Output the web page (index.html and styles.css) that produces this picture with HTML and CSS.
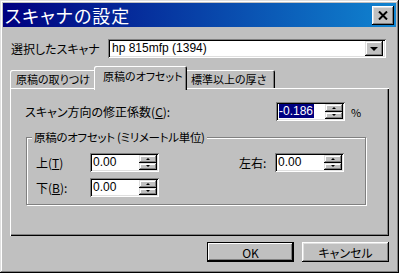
FILE: index.html
```html
<!DOCTYPE html>
<html lang="ja">
<head>
    <meta charset="UTF-8">
    <title>スキャナの設定</title>
    <link rel="stylesheet" href="styles.css">
</head>
<body>
    <div class="window">
        <div class="titlebar">
            <span class="title">スキャナの設定</span>
            <div class="close">
                <svg width="10" height="9" viewBox="0 0 10 9"><path d="M1 0.5 L9 8.5 M9 0.5 L1 8.5" stroke="#000" stroke-width="2"/></svg>
            </div>
        </div>

        <div class="content">
            <div class="scanner-row">
                <span class="scanner-label">選択したスキャナ</span>
                <div class="combo">
                    <span class="combo-text">hp 815mfp (1394)</span>
                    <div class="combo-btn"><span class="arrow-down"></span></div>
                </div>
            </div>

            <div class="tabs">
                <div class="tab tab-1">原稿の取りつけ</div>
                <div class="tab tab-active">原稿のオフセット</div>
                <div class="tab tab-3">標準以上の厚さ</div>
            </div>

            <div class="panel">
                <div class="coef-row">
                    <span class="coef-label">スキャン方向の修正係数(<u>C</u>):</span>
                    <div class="spin">
                        <span class="spin-text"><span class="selected">-0.186</span></span>
                        <div class="spin-btns">
                            <div class="spin-btn"><span class="arrow-up"></span></div>
                            <div class="spin-btn"><span class="arrow-down small"></span></div>
                        </div>
                    </div>
                    <span class="unit">%</span>
                </div>

                <div class="group">
                    <span class="legend">原稿のオフセット (ミリメートル単位)</span>
                    <div class="offset-grid">
                        <span class="field-label">上(<u>T</u>)</span>
                        <div class="spin">
                            <span class="spin-text">0.00</span>
                            <div class="spin-btns">
                                <div class="spin-btn"><span class="arrow-up"></span></div>
                                <div class="spin-btn"><span class="arrow-down small"></span></div>
                            </div>
                        </div>
                        <span></span>
                        <span class="field-label">左右:</span>
                        <div class="spin">
                            <span class="spin-text">0.00</span>
                            <div class="spin-btns">
                                <div class="spin-btn"><span class="arrow-up"></span></div>
                                <div class="spin-btn"><span class="arrow-down small"></span></div>
                            </div>
                        </div>

                        <span class="field-label">下(<u>B</u>):</span>
                        <div class="spin">
                            <span class="spin-text">0.00</span>
                            <div class="spin-btns">
                                <div class="spin-btn"><span class="arrow-up"></span></div>
                                <div class="spin-btn"><span class="arrow-down small"></span></div>
                            </div>
                        </div>
                    </div>
                </div>
            </div>

            <div class="buttons">
                <button class="btn btn-default">OK</button>
                <button class="btn">キャンセル</button>
            </div>
        </div>
    </div>
</body>
</html>
```

FILE: styles.css
```css
* {
    box-sizing: border-box;
}
body {
    margin: 0;
    background-color: #c0c0c0;
    font-family: "Noto Sans CJK JP", sans-serif;
    font-size: 12px;
    font-feature-settings: "palt" 1;
    color: #000;
}
.window {
    width: 399px;
    height: 273px;
    padding: 3px;
    background-color: #c0c0c0;
    display: flex;
    flex-direction: column;
    box-shadow: inset -1px -1px #000, inset 1px 1px #dfdfdf, inset -2px -2px #808080, inset 2px 2px #fff;
}
.titlebar {
    height: 24px;
    flex-shrink: 0;
    display: flex;
    align-items: center;
    justify-content: space-between;
    padding: 0 2px 0 2px;
    background: linear-gradient(to right, #000080, #1084d0);
}
.title {
    color: #fff;
    font-size: 18px;
    line-height: 24px;
    letter-spacing: 1px;
}
.close {
    width: 22px;
    height: 19px;
    display: flex;
    justify-content: center;
    align-items: center;
    background-color: #c0c0c0;
    box-shadow: inset -1px -1px #000, inset 1px 1px #fff, inset -2px -2px #808080, inset 2px 2px #dfdfdf;
}
.content {
    flex: 1;
    display: flex;
    flex-direction: column;
    padding: 12px 7px 0 7px;
}
.scanner-row {
    display: flex;
    align-items: center;
    height: 19px;
}
.scanner-label {
    width: 98px;
    padding-left: 1px;
}
.combo {
    width: 278px;
    height: 19px;
    display: flex;
    align-items: center;
    justify-content: space-between;
    padding: 2px 3px 2px 2px;
    background-color: #fff;
    box-shadow: inset 1px 1px #808080, inset -1px -1px #fff, inset 2px 2px #000, inset -2px -2px #dfdfdf;
}
.combo-text {
    padding-left: 2px;
    font-family: "Liberation Sans", sans-serif;
    font-size: 12px;
    line-height: 15px;
}
.combo-btn {
    width: 18px;
    height: 15px;
    display: flex;
    justify-content: center;
    align-items: center;
    background-color: #c0c0c0;
    box-shadow: inset -1px -1px #000, inset 1px 1px #dfdfdf, inset -2px -2px #808080, inset 2px 2px #fff;
}
.arrow-down {
    width: 0;
    height: 0;
    border-left: 4px solid transparent;
    border-right: 4px solid transparent;
    border-top: 4px solid #000;
}
.arrow-down.small,
.arrow-up {
    border-left-width: 2px;
    border-right-width: 2px;
    border-top-width: 2px;
}
.arrow-up {
    width: 0;
    height: 0;
    border-left: 2px solid transparent;
    border-right: 2px solid transparent;
    border-bottom: 2px solid #000;
}
.tabs {
    display: flex;
    align-items: flex-end;
    height: 22px;
    margin-top: 8px;
}
.tab {
    height: 18px;
    line-height: 17px;
    padding: 1px 0 0 6px;
    font-size: 11px;
    white-space: nowrap;
    background-color: #c0c0c0;
    box-shadow: inset 1px 1px #fff, inset -1px 0 #000, inset -2px 0 #808080;
    border-radius: 2px 2px 0 0;
}
.tab-1 {
    width: 86px;
}
.tab-active {
    position: relative;
    z-index: 1;
    width: 93px;
    height: 24px;
    margin: 0 -2px -2px -2px;
    padding: 1px 0 0 9px;
    line-height: 19px;
}
.tab-3 {
    width: 90px;
    padding-left: 6px;
}
.panel {
    height: 148px;
    padding: 14px 14px 0 15px;
    background-color: #c0c0c0;
    box-shadow: inset 1px 1px #fff, inset -1px -1px #000, inset -2px -2px #808080;
}
.coef-row {
    display: flex;
    align-items: center;
    height: 19px;
}
.coef-label {
    flex: 0 0 251px;
}
.unit {
    margin-left: 6px;
    font-size: 11px;
}
.spin {
    width: 69px;
    height: 19px;
    display: flex;
    align-items: center;
    padding: 2px;
    background-color: #fff;
    box-shadow: inset 1px 1px #808080, inset -1px -1px #fff, inset 2px 2px #000, inset -2px -2px #dfdfdf;
}
.spin-text {
    flex: 1;
    padding-left: 1px;
    font-family: "Liberation Sans", sans-serif;
    font-size: 12px;
    line-height: 15px;
}
.selected {
    background-color: #000080;
    color: #fff;
    padding-right: 1px;
}
.spin-btns {
    width: 18px;
    height: 15px;
    display: flex;
    flex-direction: column;
}
.spin-btn {
    flex: 1;
    display: flex;
    justify-content: center;
    align-items: center;
    background-color: #c0c0c0;
    box-shadow: inset -1px -1px #000, inset 1px 1px #dfdfdf, inset -2px -2px #808080, inset 2px 2px #fff;
}
.group {
    display: flex;
    flex-direction: column;
    width: 340px;
    height: 68px;
    margin: 16px 0 0 1px;
    border: 1px solid #808080;
    box-shadow: inset 1px 1px #fff, 1px 1px #fff;
}
.legend {
    align-self: flex-start;
    margin: -8px 0 0 5px;
    padding: 0 2px;
    font-size: 11.5px;
    letter-spacing: -0.3px;
    line-height: 14px;
    white-space: nowrap;
    background-color: #c0c0c0;
}
.offset-grid {
    display: grid;
    grid-template-columns: 54px 69px 80px 36px 69px;
    grid-auto-rows: 19px;
    row-gap: 6px;
    align-items: center;
    margin-top: 9px;
    padding-left: 9px;
}
.buttons {
    display: flex;
    justify-content: flex-end;
    gap: 8px;
    margin-top: 6px;
}
.btn {
    width: 87px;
    height: 20px;
    padding: 0;
    border: none;
    background-color: #c0c0c0;
    font-family: "Noto Sans CJK JP", sans-serif;
    font-size: 12px;
    font-feature-settings: "palt" 1;
    color: #000;
    box-shadow: inset -1px -1px #000, inset 1px 1px #fff, inset -2px -2px #808080, inset 2px 2px #dfdfdf;
}
.btn-default {
    box-shadow: inset 0 0 0 1px #000, inset -2px -2px #000, inset 2px 2px #fff, inset -3px -3px #808080;
}
```
